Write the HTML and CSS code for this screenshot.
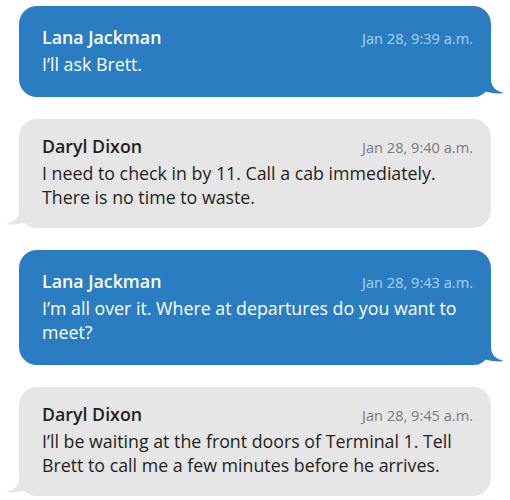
FILE: index.html
```html
<!DOCTYPE html>
<html>
<head>
<meta charset="utf-8">
<link rel="stylesheet" href="styles.css">
</head>
<body>
<div class="thread">
  <div class="bubble mine">
    <div class="head"><span class="name">Lana Jackman</span><span class="time">Jan 28, 9:39 a.m.</span></div>
    <div class="text">I’ll ask Brett.</div>
    <svg class="tail" width="28" height="21" viewBox="0 0 28 21"><path d="M0 0H14V3C14 10 18 15 27 17C21 18 13 17 7 15C5 18 2 20 0 21Z"/></svg>
  </div>
  <div class="bubble theirs">
    <div class="head"><span class="name">Daryl Dixon</span><span class="time">Jan 28, 9:40 a.m.</span></div>
    <div class="text">I need to check in by 11. Call a cab immediately.<br>There is no time to waste.</div>
    <svg class="tail" width="28" height="21" viewBox="0 0 28 21"><path d="M0 0H14V3C14 10 18 15 27 17C21 18 13 17 7 15C5 18 2 20 0 21Z"/></svg>
  </div>
  <div class="bubble mine">
    <div class="head"><span class="name">Lana Jackman</span><span class="time">Jan 28, 9:43 a.m.</span></div>
    <div class="text">I’m all over it. Where at departures do you want to<br>meet?</div>
    <svg class="tail" width="28" height="21" viewBox="0 0 28 21"><path d="M0 0H14V3C14 10 18 15 27 17C21 18 13 17 7 15C5 18 2 20 0 21Z"/></svg>
  </div>
  <div class="bubble theirs">
    <div class="head"><span class="name">Daryl Dixon</span><span class="time">Jan 28, 9:45 a.m.</span></div>
    <div class="text">I’ll be waiting at the front doors of Terminal 1. Tell<br>Brett to call me a few minutes before he arrives.</div>
    <svg class="tail" width="28" height="21" viewBox="0 0 28 21"><path d="M0 0H14V3C14 10 18 15 27 17C21 18 13 17 7 15C5 18 2 20 0 21Z"/></svg>
  </div>
</div>
</body>
</html>
```
FILE: styles.css
```css
* { box-sizing: border-box; }
html, body { margin: 0; padding: 0; background: #fff; }
body {
  font-family: "Open Sans", "Noto Sans", sans-serif;
  width: 510px;
}
.thread {
  display: flex;
  flex-direction: column;
  gap: 22px;
  padding: 6px 19px 0 19px;
}
.bubble {
  position: relative;
  border-radius: 18px;
  padding: 18px 18px 21px 23px;
}
.bubble.mine { background: #2a7dc1; color: #fff; }
.bubble.theirs { background: #e6e6e6; color: #231f20; padding-top: 14px; padding-bottom: 19px; }
.head {
  display: flex;
  justify-content: space-between;
  align-items: baseline;
}
.name {
  font-size: 17.8px;
  font-weight: 600;
  line-height: 27px;
}
.time {
  font-size: 14.6px;
  line-height: 27px;
}
.mine .time { color: #a9d2f2; }
.theirs .time { color: #7a7a7a; }
.text {
  font-size: 17.8px;
  line-height: 24px;
  white-space: nowrap;
}
.tail {
  position: absolute;
  bottom: 0;
  display: block;
}
.mine .tail { right: -14px; fill: #2a7dc1; }
.theirs .tail { left: -14px; fill: #e6e6e6; transform: scaleX(-1); }
```
